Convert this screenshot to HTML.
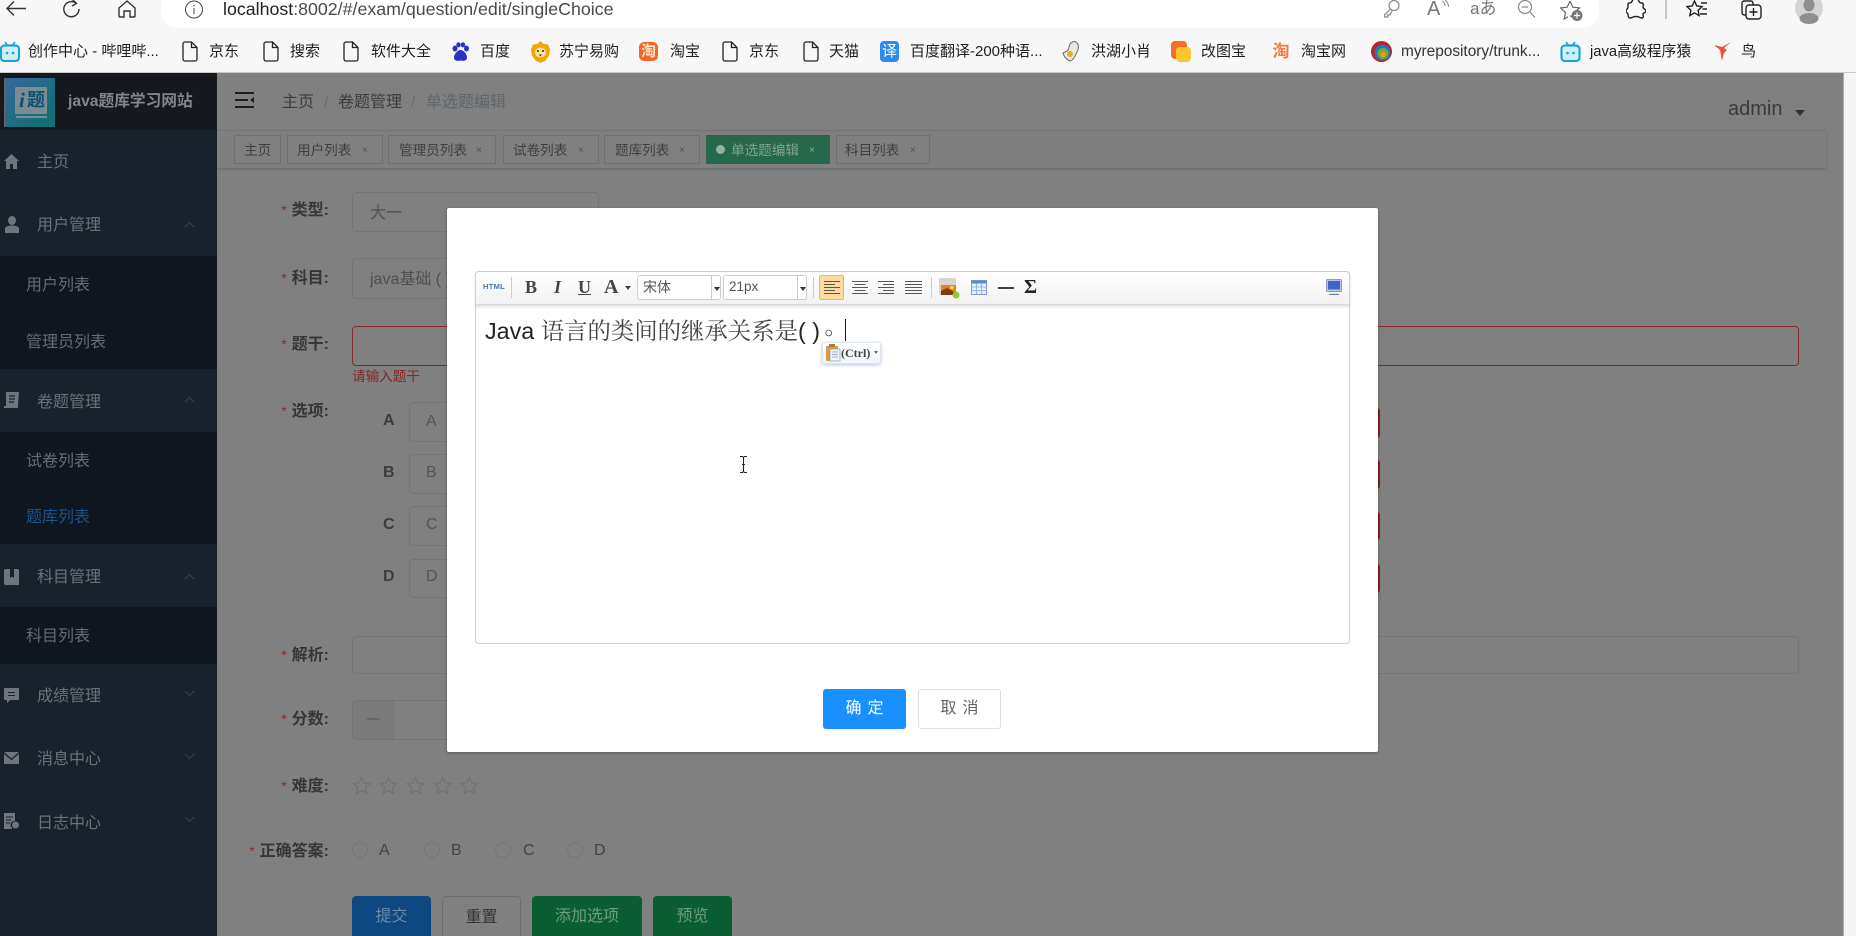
<!DOCTYPE html>
<html lang="zh-CN">
<head>
<meta charset="utf-8">
<title>单选题编辑</title>
<style>
html,body{margin:0;padding:0;width:1856px;height:936px;overflow:hidden;background:#808080}
body{position:relative;font-family:"Liberation Sans","Noto Sans CJK SC",sans-serif;filter:blur(.3px)}
.a,.t,svg.i{position:absolute}
.t{white-space:nowrap;height:20px;line-height:20px}
.bm{font-size:15px;color:#1f1f1f;top:42px}
.m{font-size:16px;color:#6c7178;left:37px}
.s{font-size:16px;color:#676c73;left:26px}
.tag{position:absolute;top:135px;height:29px;box-sizing:border-box;border:1px solid #6f6f6f;background:#808080}
.tt{font-size:13.6px;color:#3f3f3f;top:141px}
.x{font-size:10px;color:#505050;top:141px}
.l{font-size:16px;font-weight:700;color:#363636;right:1527px;text-align:right}
.l b{color:#8a2c2c;font-weight:400;margin-right:5px;font-size:14px}
.inp{position:absolute;box-sizing:border-box;border:1px solid #747474;border-radius:4px}
.ot{font-size:16px;color:#4f4f4f}
.btn{position:absolute;top:896px;height:44px;border-radius:4px;box-sizing:border-box;text-align:center;line-height:42px;font-size:16px}
.del{position:absolute;left:1370px;width:10px;background:#8a1c1c;border-radius:3px}
.tb{font-family:"Liberation Serif",serif;font-weight:700;color:#444;font-size:18px;top:277px}
</style>
</head>
<body>

<!-- browser chrome -->
<div class="a" style="left:0;top:0;width:1856px;height:73px;background:#f7f7f7;border-bottom:1px solid #c9c9c9;box-sizing:border-box"></div>
<div class="a" style="left:161px;top:-10px;width:1438px;height:38px;background:#fff;border-radius:16px"></div>

<svg class="i" style="left:4px;top:0" width="24" height="20" viewBox="0 0 24 20" fill="none" stroke="#333" stroke-width="1.4"><path d="M22 8.5H3M10 1.5L3 8.5l7 7"/></svg>
<svg class="i" style="left:61px;top:0" width="20" height="20" viewBox="0 0 20 20" fill="none" stroke="#333" stroke-width="1.4"><path d="M15.5 3.500A7.600 7.600 0 1 0 18 9"/><path d="M11 -1l4.500 4.500L11 6"/></svg>
<svg class="i" style="left:117px;top:0" width="20" height="20" viewBox="0 0 20 20" fill="none" stroke="#333" stroke-width="1.4"><path d="M2 8l8-7 8 7v8a1 1 0 0 1-1 1h-4v-6H7v6H3a1 1 0 0 1-1-1z"/></svg>
<svg class="i" style="left:184px;top:0" width="20" height="20" viewBox="0 0 20 20" fill="none" stroke="#444" stroke-width="1"><circle cx="10" cy="9.5" r="8.5"/><path d="M10 8v6M10 5v1.500"/></svg>
<div class="t" style="left:223px;top:-1px;font-size:17.800px;color:#4a4a4a"><span style="color:#222">localhost</span>:8002/#/exam/question/edit/singleChoice</div>

<svg class="i" style="left:1382px;top:0" width="19" height="18" viewBox="0 0 19 18" fill="none" stroke="#8a8a8a" stroke-width="1.200"><circle cx="12" cy="5.500" r="5"/><path d="M8.500 9L2.500 15v2h3.200v-2H8l2-4"/></svg>
<div class="t" style="left:1427px;top:-1px;font-size:20px;color:#777">A</div>
<svg class="i" style="left:1441px;top:0" width="9" height="11" viewBox="0 0 9 11" fill="none" stroke="#888" stroke-width="1"><path d="M1 1c2 1 3 3 3 5M4 0c2 1.500 3.500 4 3.500 7"/></svg>
<div class="t" style="left:1470px;top:-1px;font-size:17px;color:#777">aあ</div>
<svg class="i" style="left:1517px;top:0" width="20" height="18" viewBox="0 0 20 18" fill="none" stroke="#888" stroke-width="1.200"><circle cx="8" cy="7" r="6.500"/><path d="M13 12l5 5.500M5 7h6"/></svg>
<svg class="i" style="left:1560px;top:0" width="24" height="22" viewBox="0 0 24 22" fill="none" stroke="#666" stroke-width="1.200"><path d="M10 1l2.800 6.200 6.700.7-5 4.600 1.300 6.500L10 15.800"/><path d="M10 1L7.200 7.200.5 7.900l5 4.600-1.300 6.500L8 16.800"/><circle cx="17" cy="15.500" r="5.500" fill="#777" stroke="none"/><path d="M17 12.500v6M14 15.500h6" stroke="#fff" stroke-width="1.200"/></svg>
<svg class="i" style="left:1626px;top:0" width="20" height="20" viewBox="0 0 20 20" fill="none" stroke="#222" stroke-width="1.400"><path d="M7 0c-2 2-1 3-4 3-1.500 0-1 3-1 4 0 2-2 2-2 4s2 2 2 3c0 1 0 4 2 4 3 0 2-1.500 6-1.500s3 1.500 6 1.500c2 0 1-3 1-4 0-1.500 3-1 3-3s-3-2-3-4c0-1 1-4-1-4-3 0-2-1-4-3"/></svg>
<div class="a" style="left:1665px;top:0;width:2px;height:19px;background:#c8c8c8"></div>
<svg class="i" style="left:1686px;top:0" width="22" height="20" viewBox="0 0 22 20" fill="none" stroke="#222" stroke-width="1.400"><path d="M8.500 1l2.300 5 5.200.6-3.900 3.600 1 5.300-4.600-2.600-4.600 2.600 1-5.300L1 6.600 6.200 6zM15 3h6M16.500 9H21M14 14h7"/></svg>
<svg class="i" style="left:1741px;top:0" width="22" height="20" viewBox="0 0 22 20" fill="none" stroke="#222" stroke-width="1.400"><rect x="5" y="5" width="15" height="14" rx="3"/><path d="M5 15H3.500A2.500 2.500 0 0 1 1 12.500V3a2 2 0 0 1 2-2h7a2 2 0 0 1 2 2v2M12.500 8v8M8.500 12h8"/></svg>
<svg class="i" style="left:1795px;top:0" width="28" height="24" viewBox="0 0 28 24"><circle cx="14" cy="8" r="14" fill="#d4d4d4"/><ellipse cx="14" cy="5" rx="5.500" ry="6.500" fill="#8e8e8e"/><ellipse cx="14" cy="18.500" rx="9.500" ry="5.500" fill="#8e8e8e"/></svg>

<!-- bookmarks -->
<svg class="i" style="left:0;top:41px" width="20" height="21" viewBox="0 0 20 21"><path d="M5 1l3 4M15 1l-3 4" stroke="#14a4d8" stroke-width="1.600" fill="none"/><rect x="1" y="4.500" width="18" height="15.500" rx="3.500" fill="none" stroke="#14a4d8" stroke-width="2.200"/><rect x="3" y="6.500" width="14" height="11.500" fill="#cfeefa"/><circle cx="7" cy="12" r="1.300" fill="#14a4d8"/><circle cx="13" cy="12" r="1.300" fill="#14a4d8"/></svg>
<div class="t bm" style="left:28px;font-size:15px">创作中心 - 哔哩哔...</div>

<svg class="i" style="left:182px;top:41px" width="16" height="21" viewBox="0 0 16 21" fill="none" stroke="#222" stroke-width="1.300"><path d="M3 1h6.500L15 6.500V18a2 2 0 0 1-2 2H3a2 2 0 0 1-2-2V3a2 2 0 0 1 2-2zM9.500 1v5.500H15"/></svg>
<div class="t bm" style="left:209px">京东</div>
<svg class="i" style="left:263px;top:41px" width="16" height="21" viewBox="0 0 16 21" fill="none" stroke="#222" stroke-width="1.300"><path d="M3 1h6.500L15 6.500V18a2 2 0 0 1-2 2H3a2 2 0 0 1-2-2V3a2 2 0 0 1 2-2zM9.500 1v5.500H15"/></svg>
<div class="t bm" style="left:290px">搜索</div>
<svg class="i" style="left:343px;top:41px" width="16" height="21" viewBox="0 0 16 21" fill="none" stroke="#222" stroke-width="1.300"><path d="M3 1h6.500L15 6.500V18a2 2 0 0 1-2 2H3a2 2 0 0 1-2-2V3a2 2 0 0 1 2-2zM9.500 1v5.500H15"/></svg>
<div class="t bm" style="left:371px">软件大全</div>
<svg class="i" style="left:451px;top:42px" width="19" height="20" viewBox="0 0 19 20" fill="#2932c8"><ellipse cx="4" cy="6.500" rx="2.500" ry="3"/><ellipse cx="7.500" cy="2.800" rx="2.200" ry="2.600"/><ellipse cx="12" cy="2.800" rx="2.200" ry="2.600"/><ellipse cx="15.500" cy="6.500" rx="2.500" ry="3"/><path d="M9.500 8c-3 0-6.500 4-6.500 7.500C3 18.500 6 19.500 9.500 18.500c3.500 1 6.500 0 6.500-3C16 12 12.500 8 9.500 8z"/></svg>
<div class="t bm" style="left:480px">百度</div>
<svg class="i" style="left:531px;top:41px" width="19" height="22" viewBox="0 0 19 22"><path d="M9.500 0l3 3 4.500.5 2 5-1 6-3.500 5-5 2.500-5-2.500L1 14.500l-1-6 2-5L6.500 3z" fill="#f4a500"/><ellipse cx="9.500" cy="11.500" rx="5.500" ry="5" fill="#fbe3a6"/><circle cx="7" cy="10" r="1" fill="#4a2b00"/><circle cx="12" cy="10" r="1" fill="#4a2b00"/><path d="M8 13.500h3l-1.500 2z" fill="#4a2b00"/></svg>
<div class="t bm" style="left:559px">苏宁易购</div>
<div class="a" style="left:639px;top:42px;width:19px;height:19px;border-radius:5px;background:#f2662b;color:#fde4c8;font-size:15px;line-height:19px;text-align:center;font-weight:700">淘</div>
<div class="t bm" style="left:670px">淘宝</div>
<svg class="i" style="left:722px;top:41px" width="16" height="21" viewBox="0 0 16 21" fill="none" stroke="#222" stroke-width="1.300"><path d="M3 1h6.500L15 6.500V18a2 2 0 0 1-2 2H3a2 2 0 0 1-2-2V3a2 2 0 0 1 2-2zM9.500 1v5.500H15"/></svg>
<div class="t bm" style="left:749px">京东</div>
<svg class="i" style="left:803px;top:41px" width="16" height="21" viewBox="0 0 16 21" fill="none" stroke="#222" stroke-width="1.300"><path d="M3 1h6.500L15 6.500V18a2 2 0 0 1-2 2H3a2 2 0 0 1-2-2V3a2 2 0 0 1 2-2zM9.500 1v5.500H15"/></svg>
<div class="t bm" style="left:829px">天猫</div>
<div class="a" style="left:880px;top:41px;width:19px;height:21px;border-radius:4px;background:#2a8cf0;color:#fff;font-size:15px;line-height:21px;text-align:center">译</div>
<div class="t bm" style="left:910px">百度翻译-200种语...</div>
<svg class="i" style="left:1061px;top:41px" width="19" height="21" viewBox="0 0 19 21"><path d="M15 1c3 2 3 6 1 10-2 5-5 9-7 9-3-1-6-4-7-8l4-2c2-1 2-5 3-7 1-2 4-3 6-2z" fill="#e8e8e4" stroke="#666"/><circle cx="9" cy="13" r="3" fill="#e3b020"/></svg>
<div class="t bm" style="left:1091px">洪湖小肖</div>
<svg class="i" style="left:1171px;top:41px" width="20" height="21" viewBox="0 0 20 21"><rect x="0" y="0" width="16" height="18" rx="4" fill="#f2702a"/><rect x="5" y="6" width="15" height="15" rx="4" fill="#fbc52c"/></svg>
<div class="t bm" style="left:1201px">改图宝</div>
<div class="a" style="left:1271px;top:41px;width:20px;height:21px;color:#f4793a;font-size:17px;line-height:21px;text-align:center;font-weight:700">淘</div>
<div class="t bm" style="left:1301px">淘宝网</div>
<svg class="i" style="left:1371px;top:41px" width="21" height="21" viewBox="0 0 21 21"><circle cx="10.500" cy="10.500" r="10.500" fill="#b8232e"/><circle cx="11.500" cy="11.500" r="8" fill="#1f7ab8"/><circle cx="12" cy="12.500" r="5.500" fill="#7ba632"/><circle cx="12" cy="13.500" r="2.800" fill="#e0a020"/></svg>
<div class="t bm" style="left:1401px;font-size:15.400px;color:#333">myrepository/trunk...</div>
<svg class="i" style="left:1560px;top:41px" width="21" height="21" viewBox="0 0 21 21"><path d="M6 1l3 4M15 1l-3 4" stroke="#14a4d8" stroke-width="1.600" fill="none"/><rect x="1.500" y="4.500" width="18" height="15.500" rx="3.500" fill="none" stroke="#14a4d8" stroke-width="2.200"/><rect x="3.500" y="6.500" width="14" height="11.500" fill="#cfeefa"/><circle cx="7.500" cy="12" r="1.300" fill="#14a4d8"/><circle cx="13.500" cy="12" r="1.300" fill="#14a4d8"/></svg>
<div class="t bm" style="left:1590px;font-size:14.800px">java高级程序猿</div>
<svg class="i" style="left:1712px;top:41px" width="20" height="21" viewBox="0 0 20 21"><path d="M19 1L10 6 2 4l6 5 2 11 2-8 3-3-3-2z" fill="#e8533e"/></svg>
<div class="t bm" style="left:1741px">鸟</div>

<!-- sidebar -->
<div class="a" style="left:0;top:73px;width:217px;height:863px;background:#18222d"></div>
<div class="a" style="left:0;top:73px;width:217px;height:57px;background:#15181d"></div>
<div class="a" style="left:4px;top:78px;width:51px;height:49px;background:linear-gradient(135deg,#34699a 10%,#116f77 80%);border-left:1px solid #666;box-sizing:border-box"></div>
<div class="a" style="left:15px;top:87px;width:32px;height:27px;background:#7b8c92;border-radius:1px"></div>
<div class="a" style="left:16px;top:116px;width:31px;height:2px;background:#7b8c92"></div>
<div class="t" style="left:19px;top:90px;font-size:21px;font-weight:700;font-style:italic;color:#0c4f72;font-family:'Liberation Serif',serif">i</div>
<div class="t" style="left:27px;top:90px;font-size:18px;font-weight:700;color:#0c4f72;letter-spacing:-1px">题</div>
<div class="t" style="left:68px;top:92px;font-size:15.700px;font-weight:700;color:#82868a">java题库学习网站</div>

<div class="a" style="left:0;top:256px;width:217px;height:113px;background:#0f161f"></div>
<div class="a" style="left:0;top:432px;width:217px;height:112px;background:#0f161f"></div>
<div class="a" style="left:0;top:607px;width:217px;height:57px;background:#0f161f"></div>

<svg class="i" style="left:4px;top:154px" width="15" height="15" viewBox="0 0 15 15" fill="#70757b"><path d="M7.500 0L0 7h2v8h4v-5h3v5h4V7h2z"/></svg>
<div class="t m" style="top:153px">主页</div>
<svg class="i" style="left:5px;top:216px" width="14" height="17" viewBox="0 0 14 17" fill="#70757b"><ellipse cx="7" cy="4.500" rx="4" ry="4.500"/><path d="M0 17v-4c0-2.500 3-3.500 7-3.500s7 1 7 3.500v4z"/></svg>
<div class="t m" style="top:216px">用户管理</div>
<svg class="i" style="left:184px;top:221px" width="11" height="7" viewBox="0 0 11 7" fill="none" stroke="#364150"><path d="M1 6l4.500-4.500L10 6"/></svg>
<div class="t s" style="top:276px">用户列表</div>
<div class="t s" style="top:333px">管理员列表</div>

<svg class="i" style="left:4px;top:392px" width="15" height="16" viewBox="0 0 15 16" fill="#70757b"><path d="M2 0h13l-1 13H14v3H0v-2h2z"/><path d="M5 4h6M5 7h6M5 10h5" stroke="#18222d" stroke-width="1.200"/></svg>
<div class="t m" style="top:393px">卷题管理</div>
<svg class="i" style="left:184px;top:396px" width="11" height="7" viewBox="0 0 11 7" fill="none" stroke="#364150"><path d="M1 6l4.500-4.500L10 6"/></svg>
<div class="t s" style="top:452px">试卷列表</div>
<div class="t s" style="top:508px;color:#1f528a">题库列表</div>

<svg class="i" style="left:4px;top:569px" width="15" height="16" viewBox="0 0 15 16" fill="#70757b"><path d="M0 2a2 2 0 0 1 2-2h4v9l2-1.500L10 9V0h3a2 2 0 0 1 2 2v12H2v-1h13v3H2a2 2 0 0 1-2-2z"/></svg>
<div class="t m" style="top:568px">科目管理</div>
<svg class="i" style="left:184px;top:573px" width="11" height="7" viewBox="0 0 11 7" fill="none" stroke="#364150"><path d="M1 6l4.500-4.500L10 6"/></svg>
<div class="t s" style="top:627px">科目列表</div>

<svg class="i" style="left:4px;top:688px" width="15" height="15" viewBox="0 0 15 15" fill="#70757b"><path d="M1 0h13a1 1 0 0 1 1 1v10a1 1 0 0 1-1 1H6l-3 3v-3H1a1 1 0 0 1-1-1V1a1 1 0 0 1 1-1z"/><path d="M4 4.500h7M4 7.500h7" stroke="#18222d" stroke-width="1"/></svg>
<div class="t m" style="top:687px">成绩管理</div>
<svg class="i" style="left:184px;top:690px" width="11" height="7" viewBox="0 0 11 7" fill="none" stroke="#364150"><path d="M1 1l4.500 4.500L10 1"/></svg>
<svg class="i" style="left:4px;top:752px" width="15" height="12" viewBox="0 0 15 12" fill="#70757b"><path d="M0 0h15L7.500 6.500zM0 1.800V12h15V1.800L7.500 8.300z"/></svg>
<div class="t m" style="top:750px">消息中心</div>
<svg class="i" style="left:184px;top:753px" width="11" height="7" viewBox="0 0 11 7" fill="none" stroke="#364150"><path d="M1 1l4.500 4.500L10 1"/></svg>
<svg class="i" style="left:4px;top:813px" width="15" height="16" viewBox="0 0 15 16" fill="#70757b"><path d="M0 0h11v8a4 4 0 0 0-3 7v1H0z"/><circle cx="11.500" cy="12" r="3.500"/><path d="M2 4h7M2 7h5M2 10h4" stroke="#18222d" stroke-width="1"/></svg>
<div class="t m" style="top:814px">日志中心</div>
<svg class="i" style="left:184px;top:816px" width="11" height="7" viewBox="0 0 11 7" fill="none" stroke="#364150"><path d="M1 1l4.500 4.500L10 1"/></svg>

<!-- navbar -->
<div class="a" style="left:217px;top:73px;width:1626px;height:863px;background:#808080"></div>
<div class="a" style="left:217px;top:130px;width:1609px;height:1px;background:#797979"></div>
<div class="a" style="left:217px;top:131px;width:1609px;height:37px;background:#7f7f7f;box-shadow:0 1px 3px rgba(0,0,0,.2)"></div>
<div class="a" style="left:1843px;top:73px;width:13px;height:863px;background:#f5f5f5;border-left:1px solid #aaa;box-sizing:border-box"></div>

<svg class="i" style="left:235px;top:92px" width="20" height="17" viewBox="0 0 20 17" fill="#1d1d1d"><path d="M0 0h19v2H0zM0 7h13v2H0zM0 14h19v2H0zM19 5v6l-4-3z"/></svg>
<div class="t" style="left:282px;top:93px;font-size:16px;color:#3c3c3c">主页</div>
<div class="t" style="left:324px;top:93px;font-size:15px;color:#6a6a6a">/</div>
<div class="t" style="left:338px;top:93px;font-size:16px;color:#3c3c3c">卷题管理</div>
<div class="t" style="left:411px;top:93px;font-size:15px;color:#6a6a6a">/</div>
<div class="t" style="left:426px;top:93px;font-size:16px;color:#5f666c">单选题编辑</div>
<div class="t" style="left:1728px;top:99px;font-size:20px;color:#3a3a3a">admin</div>
<div class="a" style="left:1795px;top:110px;width:0;height:0;border:5px solid transparent;border-top:6px solid #333;border-bottom:0"></div>

<!-- tags -->
<div class="tag" style="left:234px;width:47px"></div><div class="t tt" style="left:244px">主页</div>
<div class="tag" style="left:287px;width:96px"></div><div class="t tt" style="left:297px">用户列表</div><div class="t x" style="left:362px">×</div>
<div class="tag" style="left:388px;width:108px"></div><div class="t tt" style="left:399px">管理员列表</div><div class="t x" style="left:476px">×</div>
<div class="tag" style="left:503px;width:96px"></div><div class="t tt" style="left:513px">试卷列表</div><div class="t x" style="left:578px">×</div>
<div class="tag" style="left:604px;width:96px"></div><div class="t tt" style="left:615px">题库列表</div><div class="t x" style="left:679px">×</div>
<div class="tag" style="left:706px;width:124px;background:#26684b;border-color:#26684b"></div>
<div class="a" style="left:716px;top:145px;width:9px;height:9px;border-radius:50%;background:#96b0a2"></div>
<div class="t tt" style="left:731px;color:#7fa591">单选题编辑</div><div class="t x" style="left:809px;color:#8fae9c">×</div>
<div class="tag" style="left:836px;width:94px"></div><div class="t tt" style="left:845px">科目列表</div><div class="t x" style="left:910px">×</div>

<!-- form -->
<div class="t l" style="top:200px"><b>*</b>类型:</div>
<div class="inp" style="left:352px;top:192px;width:247px;height:40px"></div>
<div class="t ot" style="left:370px;top:204px">大一</div>
<div class="t l" style="top:268px"><b>*</b>科目:</div>
<div class="inp" style="left:352px;top:258px;width:247px;height:41px"></div>
<div class="t ot" style="left:370px;top:270px">java基础 ( )</div>
<div class="t l" style="top:334px"><b>*</b>题干:</div>
<div class="inp" style="left:352px;top:326px;width:1447px;height:40px;border-color:#842c2c"></div>
<div class="t" style="left:352px;top:367px;font-size:13.600px;color:#842525">请输入题干</div>
<div class="t l" style="top:401px"><b>*</b>选项:</div>

<div class="t" style="left:383px;top:411px;font-size:16px;font-weight:700;color:#3d3d3d">A</div>
<div class="inp" style="left:409px;top:402px;width:60px;height:40px"></div><div class="t ot" style="left:426px;top:412px;color:#555">A</div>
<div class="t" style="left:383px;top:463px;font-size:16px;font-weight:700;color:#3d3d3d">B</div>
<div class="inp" style="left:409px;top:454px;width:60px;height:40px"></div><div class="t ot" style="left:426px;top:463px;color:#555">B</div>
<div class="t" style="left:383px;top:515px;font-size:16px;font-weight:700;color:#3d3d3d">C</div>
<div class="inp" style="left:409px;top:506px;width:60px;height:40px"></div><div class="t ot" style="left:426px;top:515px;color:#555">C</div>
<div class="t" style="left:383px;top:567px;font-size:16px;font-weight:700;color:#3d3d3d">D</div>
<div class="inp" style="left:409px;top:559px;width:60px;height:39px"></div><div class="t ot" style="left:426px;top:567px;color:#555">D</div>
<div class="del" style="top:408px;height:30px"></div>
<div class="del" style="top:460px;height:29px"></div>
<div class="del" style="top:512px;height:28px"></div>
<div class="del" style="top:564px;height:29px"></div>

<div class="t l" style="top:645px"><b>*</b>解析:</div>
<div class="inp" style="left:352px;top:636px;width:1447px;height:38px"></div>
<div class="t l" style="top:709px"><b>*</b>分数:</div>
<div class="inp" style="left:352px;top:700px;width:160px;height:40px"></div>
<div class="a" style="left:353px;top:701px;width:40px;height:38px;background:#7b7b7b;border-right:1px solid #747474;border-radius:3px 0 0 3px"></div>
<div class="a" style="left:367px;top:718px;width:13px;height:2px;background:#686868"></div>
<div class="t l" style="top:776px"><b>*</b>难度:</div>
<svg class="i" style="left:352px;top:776px" width="130" height="20" viewBox="0 0 130 20" fill="none" stroke="#707070" stroke-width="1.100">
<path d="M9.500 1.500l2.400 5.400 5.900.6-4.400 4 1.200 5.800-5.100-2.900-5.100 2.900 1.200-5.800-4.400-4 5.900-.6z"/>
<path transform="translate(27 0)" d="M9.500 1.500l2.400 5.400 5.900.6-4.400 4 1.200 5.800-5.100-2.900-5.100 2.900 1.200-5.800-4.400-4 5.900-.6z"/>
<path transform="translate(54 0)" d="M9.500 1.500l2.400 5.400 5.900.6-4.400 4 1.200 5.800-5.100-2.900-5.100 2.900 1.200-5.800-4.400-4 5.900-.6z"/>
<path transform="translate(81 0)" d="M9.500 1.500l2.400 5.400 5.900.6-4.400 4 1.200 5.800-5.100-2.900-5.100 2.900 1.200-5.800-4.400-4 5.900-.6z"/>
<path transform="translate(108 0)" d="M9.500 1.500l2.400 5.400 5.900.6-4.400 4 1.200 5.800-5.100-2.900-5.100 2.900 1.200-5.800-4.400-4 5.900-.6z"/>
</svg>
<div class="t l" style="top:841px"><b>*</b>正确答案:</div>
<div class="a" style="left:352px;top:842px;width:16px;height:16px;border:1px solid #767676;border-radius:50%;box-sizing:border-box"></div><div class="t" style="left:379px;top:841px;font-size:16px;color:#444">A</div>
<div class="a" style="left:424px;top:842px;width:16px;height:16px;border:1px solid #767676;border-radius:50%;box-sizing:border-box"></div><div class="t" style="left:451px;top:841px;font-size:16px;color:#444">B</div>
<div class="a" style="left:495px;top:842px;width:16px;height:16px;border:1px solid #767676;border-radius:50%;box-sizing:border-box"></div><div class="t" style="left:523px;top:841px;font-size:16px;color:#444">C</div>
<div class="a" style="left:567px;top:842px;width:16px;height:16px;border:1px solid #767676;border-radius:50%;box-sizing:border-box"></div><div class="t" style="left:594px;top:841px;font-size:16px;color:#444">D</div>

<div class="btn" style="left:352px;width:79px;background:#0d4880;color:#6e8aa6">提交</div>
<div class="btn" style="left:442px;width:79px;border:1px solid #6e6e6e;color:#333">重置</div>
<div class="btn" style="left:532px;width:110px;background:#0b5e32;color:#6e9c80">添加选项</div>
<div class="btn" style="left:653px;width:79px;background:#0b5e32;color:#6e9c80">预览</div>

<!-- dialog -->
<div class="a" style="left:447px;top:208px;width:931px;height:544px;background:#fff;border-radius:2px;box-shadow:0 1px 3px rgba(0,0,0,.3)"></div>
<div class="a" style="left:475px;top:271px;width:875px;height:373px;box-sizing:border-box;border:1px solid #d0d0d0;border-radius:4px;background:#fff"></div>
<div class="a" style="left:475px;top:271px;width:875px;height:34px;box-sizing:border-box;border:1px solid #d0d0d0;border-bottom:1px solid #d8d8d8;border-radius:4px 4px 0 0;background:linear-gradient(#fff,#f1f1f1);box-shadow:0 2px 3px rgba(0,0,0,.12)"></div>

<div class="t" style="left:483px;top:277px;font-size:7.500px;font-weight:700;color:#4a78ac;letter-spacing:.3px">HTML</div>
<div class="a" style="left:511px;top:277px;width:1px;height:21px;background:#ccc"></div>
<div class="t tb" style="left:525px">B</div>
<div class="t tb" style="left:554px;font-style:italic">I</div>
<div class="t tb" style="left:578px;text-decoration:underline">U</div>
<div class="t tb" style="left:604px;font-size:20px">A</div>
<div class="a" style="left:625px;top:286px;width:0;height:0;border:3.500px solid transparent;border-top:4px solid #444;border-bottom:0"></div>

<div class="a" style="left:637px;top:275px;width:84px;height:25px;box-sizing:border-box;border:1px solid #ccc;border-radius:3px;background:#fff"></div>
<div class="a" style="left:711px;top:276px;width:1px;height:23px;background:#ccc"></div>
<div class="a" style="left:714px;top:287px;width:0;height:0;border:3px solid transparent;border-top:4px solid #333;border-bottom:0"></div>
<div class="t" style="left:643px;top:277px;font-size:14px;color:#555">宋体</div>
<div class="a" style="left:723px;top:275px;width:84px;height:25px;box-sizing:border-box;border:1px solid #ccc;border-radius:3px;background:#fff"></div>
<div class="a" style="left:797px;top:276px;width:1px;height:23px;background:#ccc"></div>
<div class="a" style="left:800px;top:287px;width:0;height:0;border:3px solid transparent;border-top:4px solid #333;border-bottom:0"></div>
<div class="t" style="left:729px;top:277px;font-size:13.500px;color:#555">21px</div>
<div class="a" style="left:813px;top:277px;width:1px;height:21px;background:#ccc"></div>

<div class="a" style="left:819px;top:275px;width:25px;height:25px;box-sizing:border-box;background:#fbdc9f;border:1px solid #e6b86a;border-radius:2px"></div>
<svg class="i" style="left:824px;top:280px" width="100" height="15" viewBox="0 0 100 15" stroke="#555" stroke-width="1" fill="none">
<path d="M0 1.500h16M0 4.500h11M0 7.500h16M0 10.500h11M0 13.500h16"/>
<path d="M28 1.500h16M30.500 4.500h11M28 7.500h16M30.500 10.500h11M28 13.500h16"/>
<path d="M54 1.500h16M59 4.500h11M54 7.500h16M59 10.500h11M54 13.500h16"/>
<path d="M81 1.500h17M81 4.500h17M81 7.500h17M81 10.500h17M81 13.500h17"/>
</svg>
<div class="a" style="left:931px;top:277px;width:1px;height:21px;background:#ccc"></div>
<svg class="i" style="left:938px;top:277px" width="22" height="22" viewBox="0 0 22 22"><rect x="1" y="1" width="17" height="17" rx="1.500" fill="#d6d6d6"/><rect x="3" y="8" width="15" height="10" fill="#e8801e"/><path d="M3 14l6-3 9 5v2H3z" fill="#7a3d12"/><circle cx="14" cy="10.500" r="1.800" fill="#f9d55e"/><circle cx="18" cy="18" r="3.500" fill="#8ec63a"/></svg>
<svg class="i" style="left:971px;top:280px" width="16" height="15" viewBox="0 0 16 15"><rect x=".5" y=".5" width="15" height="14" fill="#e6eefa" stroke="#7d9fd6"/><path d="M.5 .5h15v3H.5z" fill="#5b8bd6"/><path d="M5.500 3.500v11M10.500 3.500v11M.5 7h15M.5 10.500h15" stroke="#9cb6de" fill="none"/></svg>
<div class="a" style="left:998px;top:287px;width:16px;height:1.500px;background:#444"></div>
<div class="t" style="left:1024px;top:277px;font-size:20px;font-weight:700;color:#222;font-family:'Liberation Serif',serif">Σ</div>
<svg class="i" style="left:1326px;top:279px" width="16" height="16" viewBox="0 0 16 16"><rect x=".5" y=".5" width="15" height="12" rx="1" fill="#b9c6e0" stroke="#8a9cc0"/><rect x="2" y="2" width="12" height="8.500" fill="#3f64c8"/><path d="M3 15.500h10" stroke="#6a7aa0" stroke-width="1.200"/></svg>

<div class="t" style="left:485px;top:317px;height:24px;line-height:24px;font-size:23.300px;color:#222">Java <span style="font-family:'Liberation Serif','Noto Serif CJK SC',serif;font-size:23.400px;color:#444">语言的类间的继承关系是</span>( ) <span style="font-family:'Noto Serif CJK SC',serif;margin-left:-5px;color:#444;position:relative;left:3px;top:-5px">。</span></div>
<div class="a" style="left:845px;top:319px;width:1px;height:22px;background:#111"></div>

<div class="a" style="left:822px;top:342px;width:59px;height:22px;box-sizing:border-box;border:1px solid #dce6f2;border-radius:3px;background:linear-gradient(#fff,#f0f5fb);box-shadow:0 1px 3px rgba(90,120,160,.45)"></div>
<svg class="i" style="left:825px;top:344px" width="16" height="18" viewBox="0 0 16 18"><rect x="1" y="2" width="12" height="15" rx="1" fill="#d69c4e"/><rect x="4" y="0" width="6" height="3" fill="#b07a36"/><rect x="5" y="5" width="10" height="12" fill="#f2f4f8" stroke="#8a9ab0" stroke-width=".7"/><path d="M7 8h6M7 10.500h6M7 13h6" stroke="#8a9ab0" stroke-width=".7"/></svg>
<div class="t" style="left:841px;top:343px;font-size:12px;font-weight:700;color:#444;font-family:'Liberation Serif',serif">(Ctrl)</div>
<div class="a" style="left:874px;top:351px;width:0;height:0;border:2.500px solid transparent;border-top:3px solid #666;border-bottom:0"></div>

<svg class="i" style="left:739px;top:456px" width="9" height="17" viewBox="0 0 9 17" fill="none" stroke="#222" stroke-width="1"><path d="M1 .5h2.500L4.500 1.500 5.500 .5H8M4.500 1.500v14M1 16.500h2.500l1-1 1 1H8M3 8.500h3"/></svg>

<div class="a" style="left:823px;top:689px;width:83px;height:40px;background:#1890ff;border-radius:3px;color:#fff;font-size:16px;line-height:40px;text-align:center;letter-spacing:6px;text-indent:6px">确定</div>
<div class="a" style="left:918px;top:689px;width:83px;height:40px;box-sizing:border-box;border:1px solid #dcdfe6;background:#fff;border-radius:3px;color:#606266;font-size:16px;line-height:38px;text-align:center;letter-spacing:6px;text-indent:6px">取消</div>

</body>
</html>
